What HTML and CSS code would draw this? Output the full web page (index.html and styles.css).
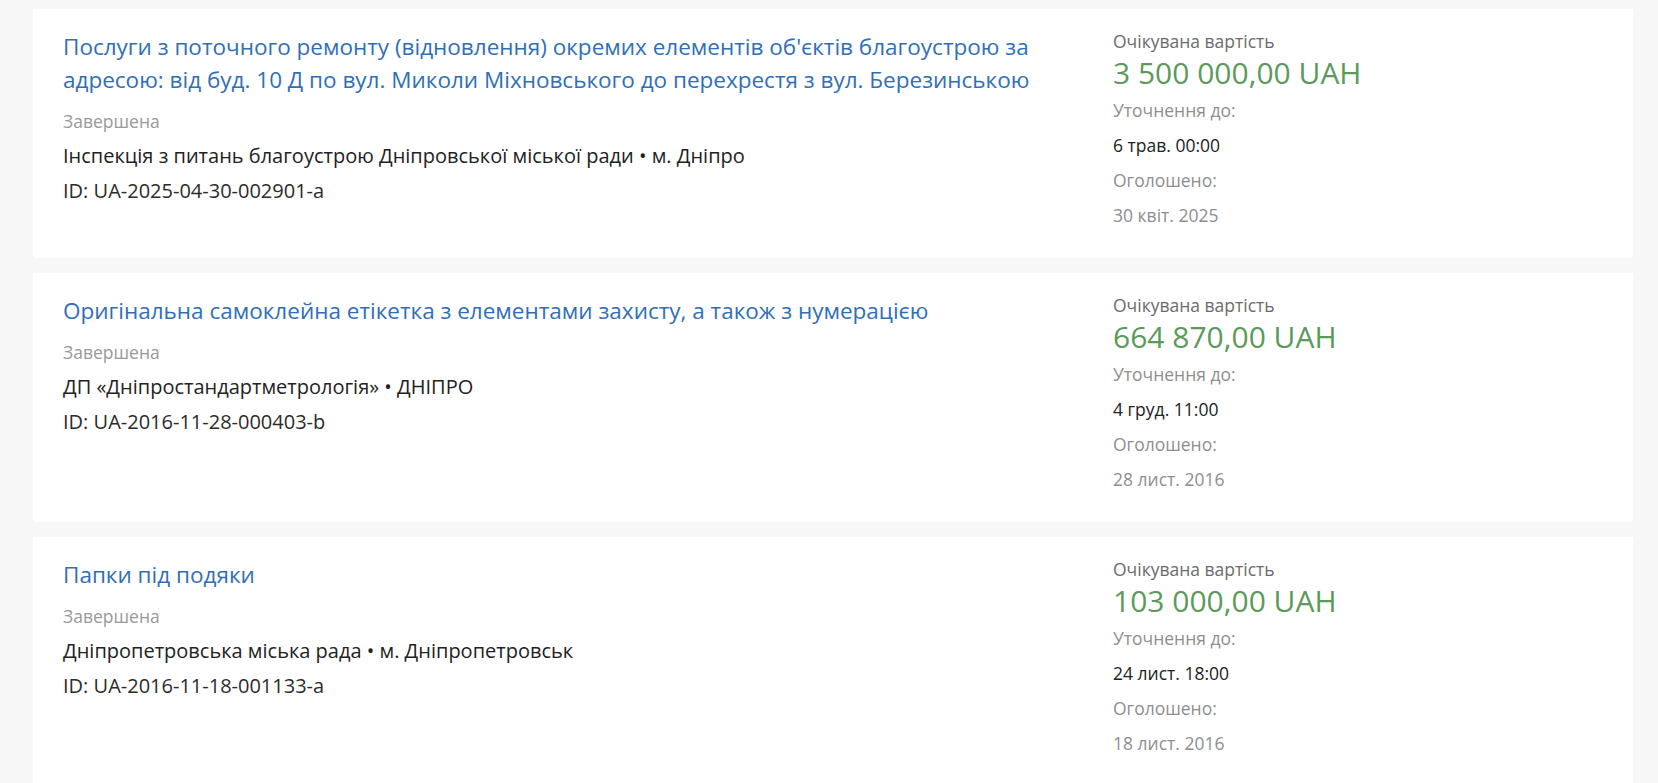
FILE: index.html
```html
<!DOCTYPE html>
<html lang="uk">
<head>
    <meta charset="UTF-8">
    <title>Закупівлі</title>
    <link rel="stylesheet" href="styles.css">
</head>
<body>
<!-- список закупівель -->
<div class="list">
    <div class="card">
        <div class="main">
            <a class="title" href="javascript:;">Послуги з поточного ремонту (відновлення) окремих елементів об'єктів благоустрою за адресою: від буд. 10 Д по вул. Миколи Міхновського до перехрестя з вул. Березинською</a>
            <div class="status">Завершена</div>
            <div class="org">Інспекція з питань благоустрою Дніпровської міської ради • м. Дніпро</div>
            <div class="tender-id">ID: UA-2025-04-30-002901-a</div>
        </div>
        <div class="side">
            <div class="side-label">Очікувана вартість</div>
            <div class="price">3 500 000,00 UAH</div>
            <div class="muted">Уточнення до:</div>
            <div class="date">6 трав. 00:00</div>
            <div class="muted">Оголошено:</div>
            <div class="muted">30 квіт. 2025</div>
        </div>
    </div>

    <div class="card">
        <div class="main">
            <a class="title" href="javascript:;">Оригінальна самоклейна етікетка з елементами захисту, а також з нумерацією</a>
            <div class="status">Завершена</div>
            <div class="org">ДП «Дніпростандартметрологія» • ДНІПРО</div>
            <div class="tender-id">ID: UA-2016-11-28-000403-b</div>
        </div>
        <div class="side">
            <div class="side-label">Очікувана вартість</div>
            <div class="price">664 870,00 UAH</div>
            <div class="muted">Уточнення до:</div>
            <div class="date">4 груд. 11:00</div>
            <div class="muted">Оголошено:</div>
            <div class="muted">28 лист. 2016</div>
        </div>
    </div>

    <div class="card">
        <div class="main">
            <a class="title" href="javascript:;">Папки під подяки</a>
            <div class="status">Завершена</div>
            <div class="org">Дніпропетровська міська рада • м. Дніпропетровськ</div>
            <div class="tender-id">ID: UA-2016-11-18-001133-a</div>
        </div>
        <div class="side">
            <div class="side-label">Очікувана вартість</div>
            <div class="price">103 000,00 UAH</div>
            <div class="muted">Уточнення до:</div>
            <div class="date">24 лист. 18:00</div>
            <div class="muted">Оголошено:</div>
            <div class="muted">18 лист. 2016</div>
        </div>
    </div>
</div>
</body>
</html>
```

FILE: styles.css
```css
* {
    margin: 0;
    padding: 0;
    box-sizing: border-box;
}

body {
    background-color: #f7f7f7;
    font-family: "Open Sans", "Noto Sans", sans-serif;
    color: #222;
}

/* список карток */
.list {
    display: flex;
    flex-direction: column;
    gap: 15px;
    padding: 9px 25px 0 33px;
}

.card {
    display: grid;
    grid-template-columns: 1fr 490px;
    column-gap: 30px;
    background-color: #fff;
    border-radius: 2px;
    padding: 21px 30px 20px 30px;
}

/* ліва частина */
.title {
    display: block;
    font-size: 22.5px;
    line-height: 33px;
    color: #306fb6;
    text-decoration: none;
    margin-bottom: 13px;
}

.status {
    font-size: 17.5px;
    line-height: 24px;
    color: #999;
    margin-bottom: 9px;
}

.org {
    font-size: 20px;
    line-height: 28px;
    color: #222;
    margin-bottom: 7px;
}

.tender-id {
    font-size: 20px;
    line-height: 28px;
    color: #2b2b2b;
}

/* права частина */
.side-label {
    font-size: 17.5px;
    line-height: 22px;
    color: #6b6b6b;
    margin-bottom: 3px;
}

.price {
    font-size: 30px;
    line-height: 36px;
    color: #5b9a5b;
    margin-bottom: 7px;
}

.muted,
.date {
    font-size: 17.5px;
    line-height: 24px;
    color: #8e8e8e;
    margin-bottom: 11px;
}

.date {
    color: #222;
}
```
